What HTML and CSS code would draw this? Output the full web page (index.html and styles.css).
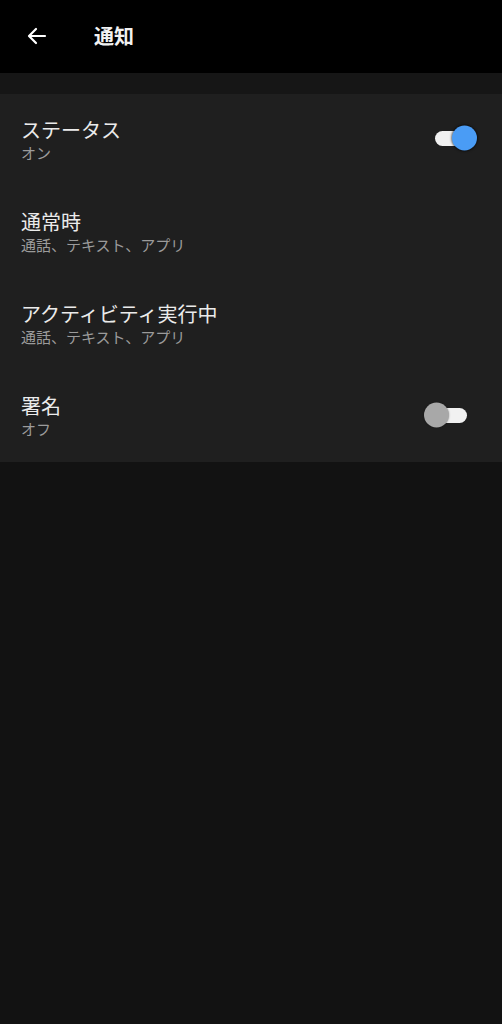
FILE: index.html
```html
<!DOCTYPE html>
<html lang="ja">
<head>
  <meta charset="UTF-8">
  <meta name="viewport" content="width=device-width, initial-scale=1.0">
  <title>通知</title>
  <link rel="stylesheet" href="styles.css">
</head>
<body>

  <div class="topBar">
    <svg class="backIcon" width="24" height="24" viewBox="0 0 24 24">
      <path d="M20 12H5M11 5l-7 7 7 7" fill="none" stroke="#fff" stroke-width="2.2" stroke-linecap="round" stroke-linejoin="round"/>
    </svg>
    <h1 class="pageTitle">通知</h1>
  </div>

  <div class="spacer"></div>

  <div class="settingsList">
    <div class="settingRow">
      <div class="settingText">
        <div class="settingTitle">ステータス</div>
        <div class="settingSub">オン</div>
      </div>
      <div class="toggle on"><span class="thumb"></span></div>
    </div>
    <div class="settingRow">
      <div class="settingText">
        <div class="settingTitle">通常時</div>
        <div class="settingSub">通話、テキスト、アプリ</div>
      </div>
    </div>
    <div class="settingRow">
      <div class="settingText">
        <div class="settingTitle">アクティビティ実行中</div>
        <div class="settingSub">通話、テキスト、アプリ</div>
      </div>
    </div>
    <div class="settingRow">
      <div class="settingText">
        <div class="settingTitle">署名</div>
        <div class="settingSub">オフ</div>
      </div>
      <div class="toggle off"><span class="thumb"></span></div>
    </div>
  </div>

</body>
</html>
```

FILE: styles.css
```css
body {
  margin: 0;
  background-color: #121212;
  font-family: "Noto Sans CJK JP", "Noto Sans", sans-serif;
  color: #ececec;
}
.topBar {
  height: 73px;
  background-color: #000;
  display: flex;
  align-items: center;
  padding-left: 25px;
}
.backIcon {
  display: block;
  margin-top: -2px;
}
.pageTitle {
  margin: -2px 0 0 45px;
  font-size: 20px;
  font-weight: bold;
  color: #f2f2f2;
}
.spacer {
  height: 21px;
  background-color: #161616;
}
.settingsList {
  background-color: #1f1f1f;
}
.settingRow {
  height: 92px;
  padding: 0 25px 0 21px;
  display: flex;
  align-items: center;
  justify-content: space-between;
  box-sizing: border-box;
}
.settingTitle {
  font-size: 20px;
  line-height: 26px;
  color: #ebebeb;
}
.settingSub {
  font-size: 15px;
  line-height: 20px;
  color: #9b9b9b;
}
.toggle {
  position: relative;
  width: 34px;
  height: 15px;
  border-radius: 8px;
  background-color: #f1f1f1;
}
.toggle .thumb {
  position: absolute;
  top: 50%;
  width: 25px;
  height: 25px;
  border-radius: 50%;
  transform: translateY(-50%);
}
.toggle.on {
  margin-right: 8px;
  margin-top: -4px;
}
.toggle.on .thumb {
  right: -8px;
  background-color: #4a9cf5;
  box-shadow: 0 0 2px 1px rgba(0, 0, 0, 0.5);
}
.toggle.off {
  margin-right: 10px;
  margin-top: -2px;
}
.toggle.off .thumb {
  left: -9px;
  background-color: #a8a8a8;
  box-shadow: 0 0 2px rgba(0, 0, 0, 0.4);
}
```
